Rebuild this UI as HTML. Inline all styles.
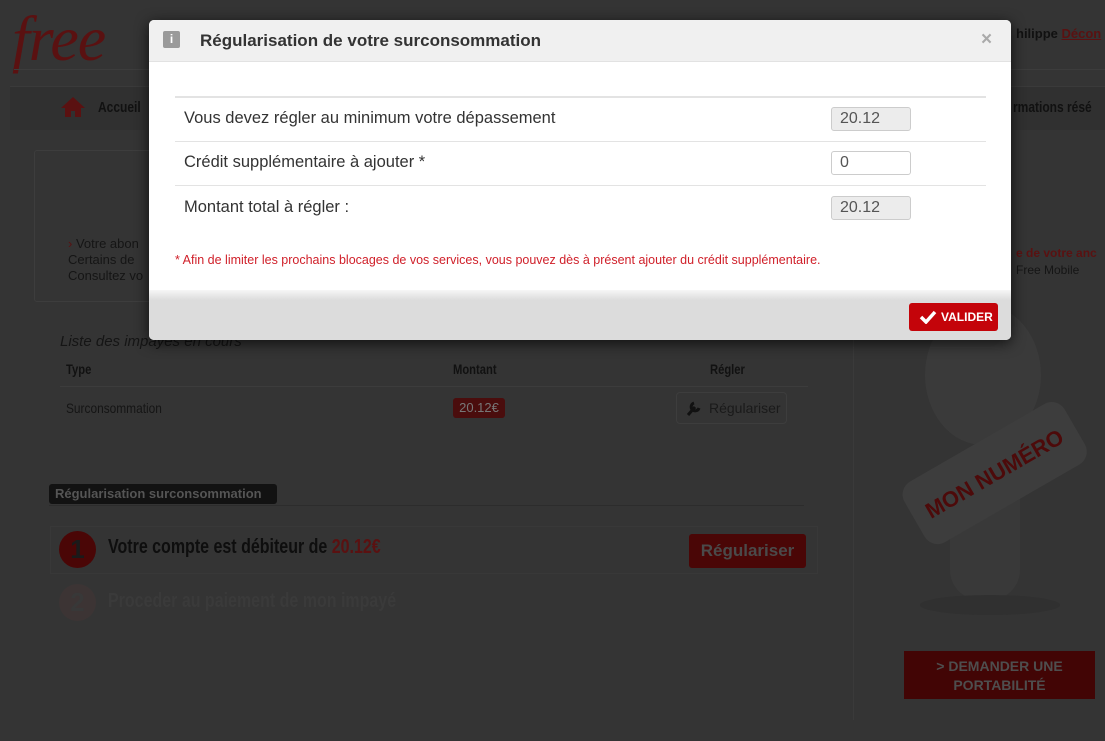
<!DOCTYPE html>
<html><head><meta charset="utf-8"><style>
*{margin:0;padding:0;box-sizing:border-box}
body{width:1105px;height:741px;overflow:hidden;background:#343434;font-family:"Liberation Sans",sans-serif;position:relative}
.a{position:absolute;white-space:nowrap}
.n{font-family:"Liberation Sans",sans-serif;font-weight:bold;transform:scaleX(.8);transform-origin:left}
</style></head><body>
<div class="a" style="left:12px;top:2px;font:italic 64px 'Liberation Serif',serif;color:#5a1111;letter-spacing:-1px">free</div>
<div class="a" style="left:1016px;top:26px;font-size:13px;font-weight:bold;color:#111">hilippe <span style="color:#5a1111;text-decoration:underline">Décon</span></div>
<div class="a" style="left:14px;top:69px;width:1091px;height:1px;background:#3c3c3c"></div>
<div class="a" style="left:10px;top:86px;width:1095px;height:44px;background:#303030;border-top:1px solid #3a3a3a"></div>
<svg class="a" style="left:60px;top:95px" width="26" height="24"><path d="M13 2 L1 13 L5 13 L5 22 L11 22 L11 16 L15 16 L15 22 L21 22 L21 13 L25 13 Z" fill="#5a1111"/></svg>
<div class="a n" style="left:98px;top:99px;font-size:15px;color:#111">Accueil</div>
<div class="a n" style="left:1013px;top:99px;font-size:15px;color:#111">rmations résé</div>
<div class="a" style="left:34px;top:150px;width:130px;height:152px;border:1px solid #3d3d3d;border-radius:3px"></div>
<div class="a" style="left:68px;top:236px;font-size:13px;color:#151515;line-height:16px"><span style="color:#5a1111">›</span> Votre abon<br>Certains de<br>Consultez vo</div>
<div class="a" style="left:1016px;top:246px;font-size:12px;font-weight:bold;color:#5a1111">e de votre anc</div>
<div class="a" style="left:1016px;top:263px;font-size:12px;color:#151515">Free Mobile</div>
<div class="a" style="left:853px;top:340px;width:1px;height:380px;background:#3a3a3a"></div>
<div class="a" style="left:60px;top:333px;font:italic 15px 'Liberation Sans',sans-serif;color:#151515">Liste des impayés en cours</div>
<div class="a n" style="left:66px;top:361px;font-size:14px;color:#111">Type</div>
<div class="a n" style="left:453px;top:361px;font-size:14px;color:#111">Montant</div>
<div class="a n" style="left:710px;top:361px;font-size:14px;color:#111">Régler</div>
<div class="a" style="left:60px;top:386px;width:748px;height:1px;background:#3c3c3c"></div>
<div class="a" style="left:66px;top:400px;font-size:14px;color:#151515;transform:scaleX(.85);transform-origin:left">Surconsommation</div>
<div class="a" style="left:453px;top:398px;width:52px;height:20px;background:#4a0d0d;border-radius:3px;color:#777;font-size:13px;text-align:center;line-height:20px">20.12€</div>
<div class="a" style="left:676px;top:392px;width:111px;height:32px;border:1px solid #3d3d3d;border-radius:4px;color:#1a1a1a;font-size:14px;line-height:30px;padding-left:32px">Régulariser</div>
<svg class="a" style="left:685px;top:399px" width="18" height="18"><path d="M3 16 L10 8 M9 4 a4 4 0 1 0 5 5" stroke="#111" stroke-width="3" fill="none"/></svg>
<div class="a" style="left:49px;top:484px;width:228px;height:20px;background:#121212;border-radius:3px;color:#555;font-size:13px;font-weight:bold;line-height:20px;padding-left:6px">Régularisation surconsommation</div>
<div class="a" style="left:49px;top:505px;width:755px;height:1px;background:#2c2c2c"></div>
<div class="a" style="left:50px;top:526px;width:768px;height:48px;border:1px solid #383838"></div>
<div class="a" style="left:59px;top:531px;width:37px;height:37px;border-radius:50%;background:#4a0606;color:#1a1a1a;font-size:26px;font-weight:bold;text-align:center;line-height:37px">1</div>
<div class="a n" style="left:108px;top:536px;font-size:20px;color:#0e0e0e">Votre compte est débiteur de <span style="color:#5a1111">20.12€</span></div>
<div class="a" style="left:689px;top:534px;width:117px;height:34px;background:#4a0606;border-radius:3px;color:#4a4a4a;font-size:17px;font-weight:bold;text-align:center;line-height:34px">Régulariser</div>
<div class="a" style="left:59px;top:584px;width:37px;height:37px;border-radius:50%;background:#3c3434;color:#383838;font-size:26px;font-weight:bold;text-align:center;line-height:37px">2</div>
<div class="a n" style="left:108px;top:590px;font-size:20px;color:#3a3a3a">Proceder au paiement de mon impayé</div>
<svg class="a" style="left:880px;top:300px" width="225" height="330">
<ellipse cx="103" cy="75" rx="58" ry="70" fill="#3a3a3a"/>
<rect x="70" y="170" width="70" height="130" rx="30" fill="#393939"/>
<g transform="rotate(-30 110 170)"><rect x="20" y="140" width="185" height="70" rx="15" fill="#3d3d3d"/>
<text x="112" y="183" text-anchor="middle" font-family="Liberation Sans" font-weight="bold" font-size="22" fill="#4d0a0a">MON NUMÉRO</text></g>
<ellipse cx="110" cy="305" rx="70" ry="10" fill="#303030"/>
</svg>
<div class="a" style="left:904px;top:651px;width:191px;height:48px;background:#420505;color:#4e4e4e;font-size:14px;font-weight:bold;text-align:center;line-height:19px;padding-top:6px">&gt; DEMANDER UNE<br>PORTABILITÉ</div>
<div class="a" style="left:149px;top:20px;width:862px;height:320px;background:#fff;border-radius:5px;box-shadow:0 3px 14px rgba(0,0,0,.7);overflow:hidden">
 <div class="a" style="left:0;top:0;width:862px;height:42px;background:#f0f0f0;border-bottom:1px solid #e2e2e2"></div>
 <div class="a" style="left:14px;top:11px;width:17px;height:17px;background:#9a9a9a;border-radius:2px;color:#fff;font-size:12px;font-weight:bold;text-align:center;line-height:17px">i</div>
 <div class="a" style="left:51px;top:11px;font-size:17px;font-weight:bold;color:#333">Régularisation de votre surconsommation</div>
 <div class="a" style="left:832px;top:9px;font-size:19px;font-weight:bold;color:#aaa">×</div>
 <div class="a" style="left:26px;top:76px;width:811px;height:2px;background:#e3e3e3"></div>
 <div class="a" style="left:35px;top:89px;font-size:16.5px;color:#333">Vous devez régler au minimum votre dépassement</div>
 <div class="a" style="left:26px;top:121px;width:811px;height:1px;background:#e3e3e3"></div>
 <div class="a" style="left:35px;top:133px;font-size:16.5px;color:#333">Crédit supplémentaire à ajouter *</div>
 <div class="a" style="left:26px;top:165px;width:811px;height:1px;background:#e3e3e3"></div>
 <div class="a" style="left:35px;top:178px;font-size:16.5px;color:#333">Montant total à régler :</div>
 <div class="a" style="left:682px;top:87px;width:80px;height:24px;background:#ececec;border:1px solid #ccc;border-radius:3px;font-size:16px;color:#555;padding-left:8px;line-height:22px">20.12</div>
 <div class="a" style="left:682px;top:131px;width:80px;height:24px;background:#fff;border:1px solid #ccc;border-radius:3px;font-size:16px;color:#555;padding-left:8px;line-height:22px">0</div>
 <div class="a" style="left:682px;top:176px;width:80px;height:24px;background:#ececec;border:1px solid #ccc;border-radius:3px;font-size:16px;color:#555;padding-left:8px;line-height:22px">20.12</div>
 <div class="a" style="left:26px;top:233px;font-size:12.5px;color:#d0202a">* Afin de limiter les prochains blocages de vos services, vous pouvez dès à présent ajouter du crédit supplémentaire.</div>
 <div class="a" style="left:0;top:270px;width:862px;height:50px;background:linear-gradient(#f6f6f6,#dcdcdc 20%,#dcdcdc)"></div>
 <div class="a" style="left:760px;top:283px;width:89px;height:28px;background:#c4040a;border-radius:3px;color:#fff;font-size:12px;font-weight:bold;line-height:28px;padding-left:32px">VALIDER</div>
 <svg class="a" style="left:770px;top:290px" width="18" height="14"><path d="M2 7 L7 12 L16 2" stroke="#fff" stroke-width="3.5" fill="none"/></svg>
</div>
</body></html>
